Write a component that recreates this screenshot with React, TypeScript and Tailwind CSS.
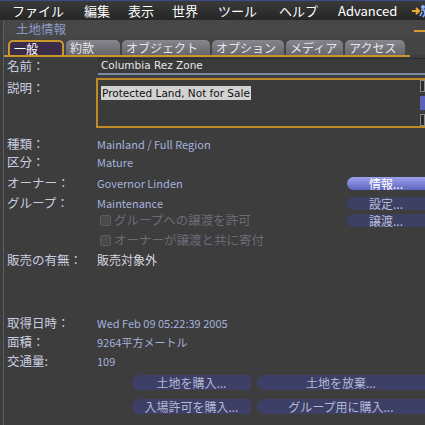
import { type FC, type ReactNode } from "react";

const JP = "font-['Noto_Sans_CJK_JP',sans-serif]";
const DV = "font-['DejaVu_Sans',sans-serif]";

const menuItems = [
  { label: "ファイル", x: "ml-[12px]" },
  { label: "編集", x: "ml-[20px]" },
  { label: "表示", x: "ml-[18px]" },
  { label: "世界", x: "ml-[18px]" },
  { label: "ツール", x: "ml-[20px]" },
  { label: "ヘルプ", x: "ml-[22px]" },
  { label: "Advanced", x: "ml-[20px]" },
];

const tabs = [
  { label: "一般", w: "w-[56px]", active: true },
  { label: "約款", w: "w-[54px]" },
  { label: "オブジェクト", w: "w-[88px]" },
  { label: "オプション", w: "w-[72px]" },
  { label: "メディア", w: "w-[57px]" },
  { label: "アクセス", w: "w-[60px]" },
];

const Label: FC<{ children: ReactNode }> = ({ children }) => (
  <div className="w-[93px] shrink-0 pl-[3px] text-[12.5px] text-[#c9cde0]">
    {children}
  </div>
);

const Value: FC<{ children: ReactNode; white?: boolean }> = ({ children, white }) => (
  <div className={`text-[11px] ${white ? "text-[#d8d8e0] text-[12px]" : "text-[#a6b2de]"}`}>
    {children}
  </div>
);

const SideButton: FC<{ label: string; bright?: boolean }> = ({ label, bright }) => (
  <button
    className={`ml-auto h-[13px] w-[78px] rounded-l-full text-[12px] leading-[13px] ${
      bright
        ? "bg-gradient-to-b from-[#9da2ec] to-[#5f64c0] text-white"
        : "bg-[#3d3f63] text-[#b9bdd6]"
    }`}
  >
    {label}
  </button>
);

const BottomButton: FC<{ label: string; w: string }> = ({ label, w }) => (
  <button
    className={`${w} h-[15px] rounded-l-full bg-[#3d3f66] text-[12px] leading-[15px] text-[#b4b8d4]`}
  >
    {label}
  </button>
);

const Check: FC<{ label: string }> = ({ label }) => (
  <div className="flex items-center pl-[96px]">
    <div className="h-[11px] w-[11px] rounded-[2px] border border-[#5d5d5d] bg-[#4a4a4a]" />
    <span className="ml-[3px] text-[12.5px] text-[#6c6c78]">{label}</span>
  </div>
);

export default function App() {
  return (
    <div className={`flex h-[425px] w-[425px] flex-col overflow-hidden bg-[#3d3d3d] ${JP}`}>
      {/* menu bar */}
      <div className="flex h-[20px] shrink-0 items-center border-t border-[#3c4a88] bg-gradient-to-b from-[#3a3a3a] to-[#262626] text-[13px] text-white">
        {menuItems.map((m) => (
          <span key={m.label} className={m.x}>
            {m.label}
          </span>
        ))}
        <svg className="ml-auto mr-[-2px]" width="16" height="14" viewBox="0 0 16 14">
          <path d="M1 7h7M5 4l3 3-3 3" stroke="#e8b030" strokeWidth="2" fill="none" />
          <circle cx="12" cy="3" r="2" fill="#8fb0ff" />
          <path d="M10 6l3 0 1 4-2 3M11 8l-2 4" stroke="#8fb0ff" strokeWidth="1.6" fill="none" />
        </svg>
      </div>

      <div className="ml-[3px] flex flex-1 flex-col border-l border-[#5e5e5e]">
        {/* title */}
        <div className="flex h-[18px] shrink-0 items-center bg-[#474747] pl-[12px] text-[12.5px] text-[#8c9bc4]">
          土地情報
          <div className="ml-auto mt-[4px] h-[2px] w-[11px] bg-[#d89a30]" />
        </div>

        {/* tabs */}
        <div className="flex h-[17px] shrink-0 items-end gap-[2px] bg-[#444444] pl-[4px]">
          {tabs.map((t) => (
            <div
              key={t.label}
              className={`${t.w} flex h-[15px] items-center rounded-t-[5px] pl-[4px] text-[12px] leading-none ${
                t.active
                  ? "border-x-2 border-t-2 border-[#c9962c] bg-[#3b2d4a] text-white"
                  : "bg-gradient-to-b from-[#86868c] to-[#66666c] text-[#e6e6ee]"
              }`}
            >
              {t.label}
            </div>
          ))}
        </div>
        <div className="h-[2px] w-[406px] shrink-0 bg-[#c9962c]" />

        {/* body */}
        <div className="flex flex-col pt-[1px]">
          <div className="flex h-[17px] items-center">
            <Label>名前：</Label>
            <div className={`ml-[1px] flex h-[17px] flex-1 items-center border-b-2 border-t border-b-[#7b8aa2] border-t-[#2a2a2a] bg-[#3a3a3a] pl-[3px] text-[10.5px] text-[#e6e6e6] ${DV}`}>
              Columbia Rez Zone
            </div>
          </div>

          <div className="mt-[3px] flex h-[50px]">
            <div className="pt-[1px]">
              <Label>説明：</Label>
            </div>
            <div className="ml-[-1px] flex flex-1 border-y-2 border-l-2 border-[#c08a2a] bg-[#3b3b3b]">
              <div className="flex-1 pl-[3px] pt-[3px] leading-[14px]">
                <span className={`bg-[#d2d2d2] px-[1px] py-[1px] text-[10.5px] text-[#111111] ${DV}`}>
                  Protected Land, Not for Sale
                </span>
              </div>
              <div className="flex w-[5px] flex-col justify-between">
                <div className="h-[12px] border border-[#888888] bg-[#2b2b2b]" />
                <div className="h-[14px] bg-[#5b62b8]" />
                <div className="h-[12px] border border-[#888888] bg-[#2b2b2b]" />
              </div>
            </div>
          </div>

          <div className="mt-[7px] flex h-[18px] items-center">
            <Label>種類：</Label>
            <Value>Mainland / Full Region</Value>
          </div>
          <div className="flex h-[18px] items-center">
            <Label>区分：</Label>
            <Value>Mature</Value>
          </div>
          <div className="flex h-[24px] items-center">
            <Label>オーナー：</Label>
            <Value>Governor Linden</Value>
            <SideButton label="情報..." bright />
          </div>
          <div className="flex h-[16px] items-center">
            <Label>グループ：</Label>
            <Value>Maintenance</Value>
            <SideButton label="設定..." />
          </div>
          <div className="flex h-[18px] items-center">
            <Check label="グループへの譲渡を許可" />
            <SideButton label="譲渡..." />
          </div>
          <div className="flex h-[22px] items-center">
            <Check label="オーナーが譲渡と共に寄付" />
          </div>
          <div className="flex h-[18px] items-center">
            <Label>販売の有無：</Label>
            <Value white>販売対象外</Value>
          </div>

          <div className="mt-[45px] flex h-[19px] items-center">
            <Label>取得日時：</Label>
            <Value>Wed Feb 09 05:22:39 2005</Value>
          </div>
          <div className="flex h-[19px] items-center">
            <Label>面積：</Label>
            <Value>9264平方メートル</Value>
          </div>
          <div className="flex h-[19px] items-center">
            <Label>交通量:</Label>
            <Value>109</Value>
          </div>

          <div className="mt-[4px] flex gap-[6px] pl-[128px]">
            <BottomButton label="土地を購入..." w="w-[120px]" />
            <BottomButton label="土地を放棄..." w="w-[170px]" />
          </div>
          <div className="mt-[9px] flex gap-[6px] pl-[128px]">
            <BottomButton label="入場許可を購入..." w="w-[120px]" />
            <BottomButton label="グループ用に購入..." w="w-[170px]" />
          </div>
        </div>
      </div>
    </div>
  );
}
